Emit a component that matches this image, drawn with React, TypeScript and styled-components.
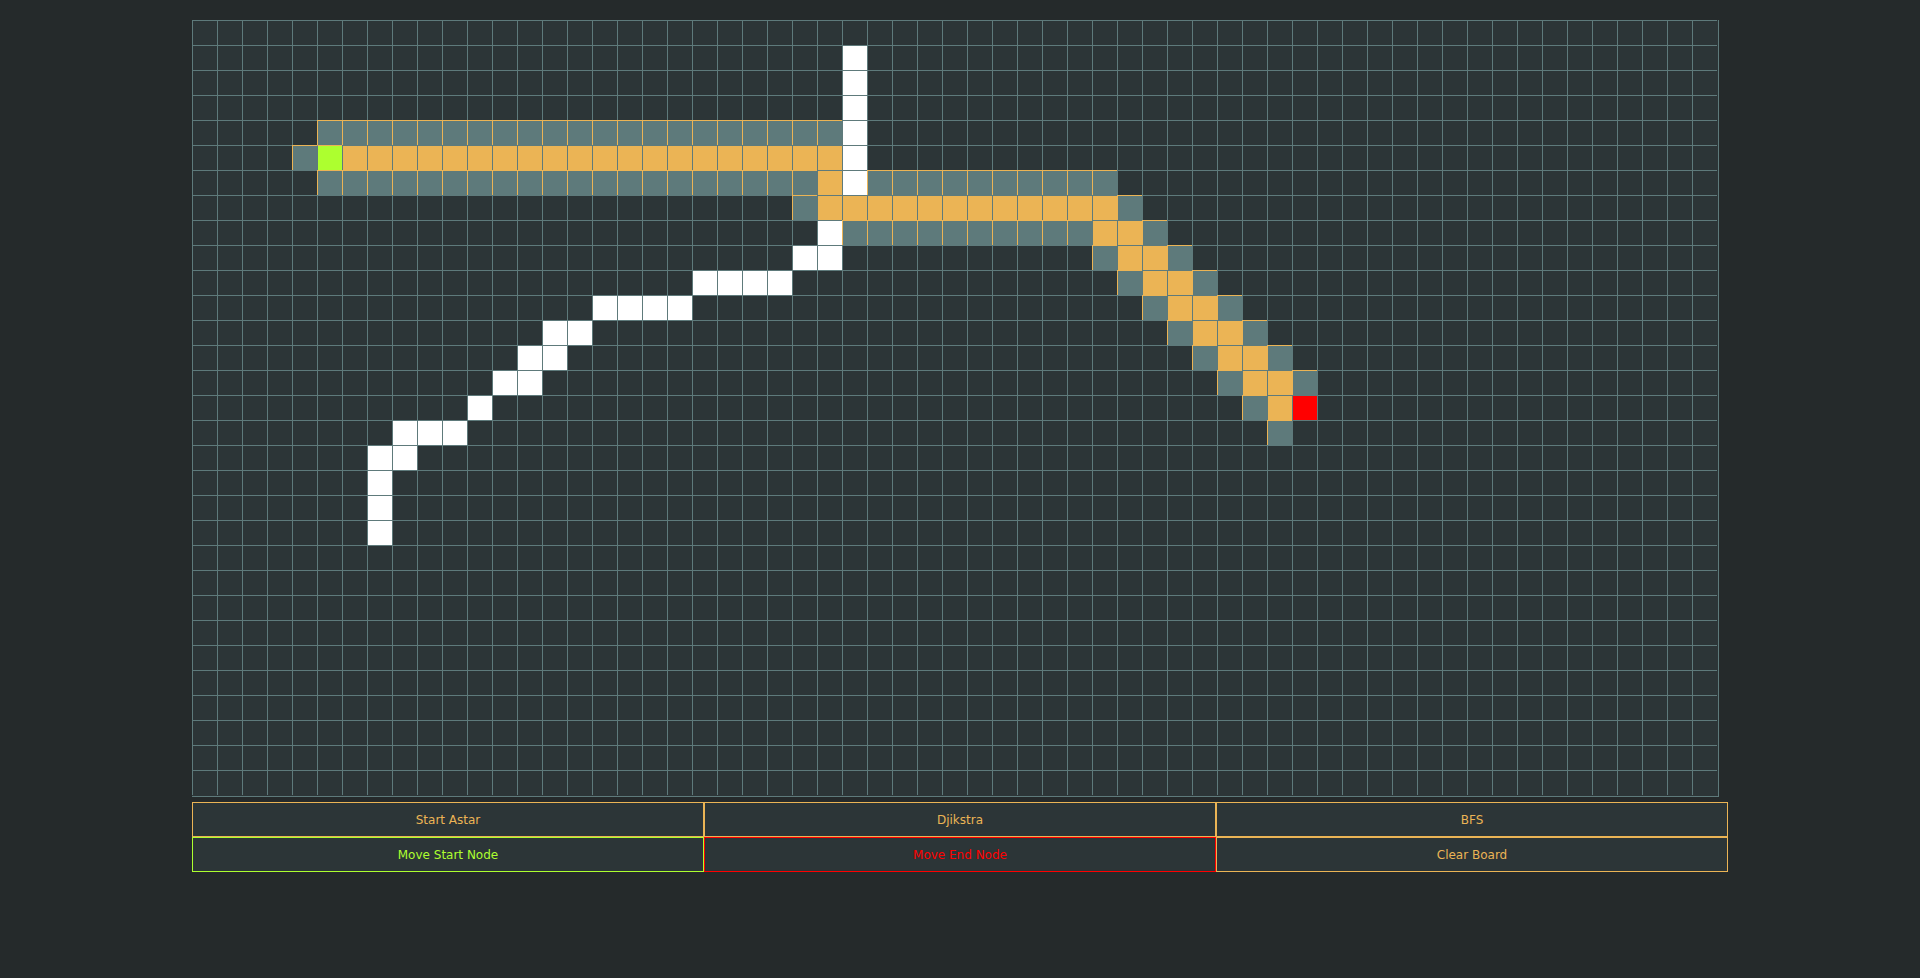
import React from "react";
import styled, { createGlobalStyle, css } from "styled-components";

const ROWS = 31;
const COLS = 61;

type Kind = "empty" | "wall" | "visited" | "path" | "start" | "end";

const C = {
  page: "#252a2b",
  cell: "#2c3537",
  line: "#5e7a7b",
  visited: "#5e7a7b",
  orange: "#ebb455",
  start: "#adff2f",
  end: "#ff0000",
};

const GlobalStyle = createGlobalStyle`
  html, body {
    margin: 0;
    padding: 0;
    background: ${C.page};
    font-family: "DejaVu Sans", "Liberation Sans", sans-serif;
  }
`;

const Page = styled.div`
  padding: 20px 10% 0;
  min-height: 958px;
  background: ${C.page};
`;

const Board = styled.div`
  display: grid;
  grid-template-columns: repeat(${COLS}, 25px);
  grid-auto-rows: 25px;
  width: max-content;
  padding: 0 1px 1px 0;
  background: ${C.cell};
  border-right: 1px solid ${C.line};
  border-bottom: 1px solid ${C.line};
`;

const kindStyles: Record<Kind, ReturnType<typeof css>> = {
  empty: css`
    background: ${C.cell};
  `,
  wall: css`
    background: #ffffff;
  `,
  visited: css`
    background: ${C.visited};
    border-top-color: ${C.orange};
    border-left-color: ${C.orange};
  `,
  path: css`
    background: ${C.orange};
  `,
  start: css`
    background: ${C.start};
    border-top-color: ${C.orange};
  `,
  end: css`
    background: ${C.end};
  `,
};

const Cell = styled.div<{ $kind: Kind }>`
  box-sizing: border-box;
  width: 25px;
  height: 25px;
  border-top: 1px solid ${C.line};
  border-left: 1px solid ${C.line};
  ${(p) => kindStyles[p.$kind]}
`;

const Controls = styled.div`
  display: grid;
  grid-template-columns: repeat(3, 1fr);
  margin-top: 5px;
`;

const Button = styled.button<{ $color: string }>`
  box-sizing: border-box;
  height: 35px;
  margin: 0;
  padding: 1px 0 0;
  background: ${C.cell};
  border: 1px solid ${(p) => p.$color};
  color: ${(p) => p.$color};
  font-family: "DejaVu Sans", "Liberation Sans", sans-serif;
  font-size: 12px;
  cursor: pointer;
`;

function range(a: number, b: number) {
  const r: number[] = [];
  for (let i = a; i <= b; i++) r.push(i);
  return r;
}

function buildGrid(): Kind[][] {
  const g: Kind[][] = Array.from({ length: ROWS }, () =>
    Array.from({ length: COLS }, () => "empty" as Kind)
  );
  const set = (r: number, cs: number[], k: Kind) => cs.forEach((c) => (g[r][c] = k));

  // walls
  range(1, 6).forEach((r) => set(r, [26], "wall"));
  set(8, [25], "wall");
  set(9, [24, 25], "wall");
  set(10, range(20, 23), "wall");
  set(11, range(16, 19), "wall");
  set(12, [14, 15], "wall");
  set(13, [13, 14], "wall");
  set(14, [12, 13], "wall");
  set(15, [11], "wall");
  set(16, range(8, 10), "wall");
  set(17, [7, 8], "wall");
  set(18, [7], "wall");
  set(19, [7], "wall");
  set(20, [7], "wall");

  // visited
  set(4, range(5, 25), "visited");
  set(5, [4], "visited");
  set(6, range(5, 24), "visited");
  set(6, range(27, 36), "visited");
  set(7, [24, 37], "visited");
  set(8, range(26, 35), "visited");
  set(8, [38], "visited");
  for (let r = 9; r <= 14; r++) set(r, [r + 27, r + 30], "visited");
  set(15, [42], "visited");
  set(16, [43], "visited");

  // path
  set(5, range(6, 25), "path");
  set(6, [25], "path");
  set(7, range(25, 36), "path");
  for (let r = 8; r <= 14; r++) set(r, [r + 28, r + 29], "path");
  set(15, [43], "path");

  g[5][5] = "start";
  g[15][44] = "end";
  return g;
}

const grid = buildGrid();

const buttons: { label: string; color: string }[] = [
  { label: "Start Astar", color: C.orange },
  { label: "Djikstra", color: C.orange },
  { label: "BFS", color: C.orange },
  { label: "Move Start Node", color: C.start },
  { label: "Move End Node", color: C.end },
  { label: "Clear Board", color: C.orange },
];

export default function App() {
  return (
    <>
      <GlobalStyle />
      <Page>
        <Board>
          {grid.map((row, r) =>
            row.map((k, c) => <Cell key={`${r}-${c}`} $kind={k} />)
          )}
        </Board>
        <Controls>
          {buttons.map((b) => (
            <Button key={b.label} $color={b.color}>
              {b.label}
            </Button>
          ))}
        </Controls>
      </Page>
    </>
  );
}
